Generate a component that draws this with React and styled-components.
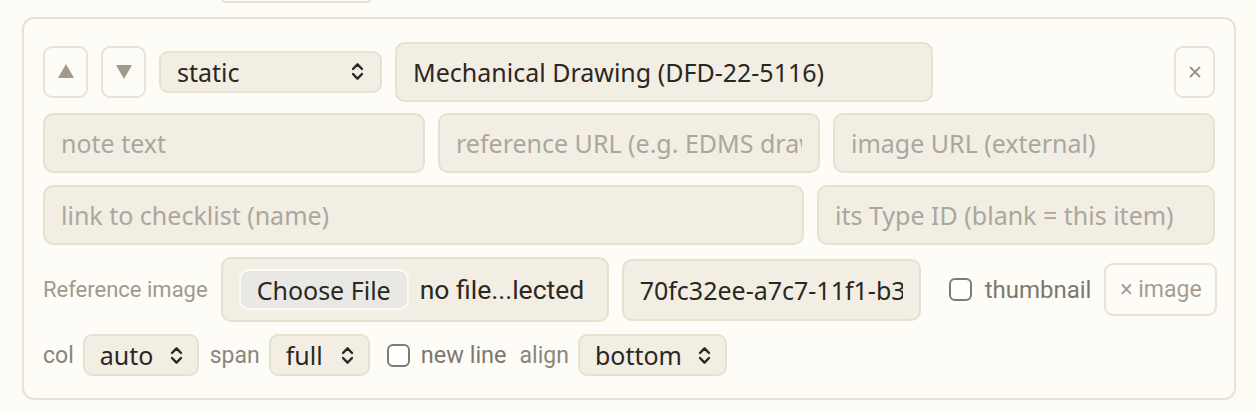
import React from 'react';
import styled, { createGlobalStyle } from 'styled-components';

const GlobalStyle = createGlobalStyle`
  html, body {
    margin: 0;
    padding: 0;
    background: #fcfbf6;
  }
  body {
    font-family: "Noto Sans", "Open Sans", sans-serif;
    color: #2b2722;
  }
  * { box-sizing: border-box; }
`;

const Page = styled.div`
  width: 1256px;
  height: 412px;
  overflow: hidden;
  padding: 0 20px 0 22px;
`;

const PrevTail = styled.div`
  margin-left: 200px;
  width: 149px;
  height: 3px;
  border: 2px solid #e7e2d3;
  border-top: none;
  border-radius: 0 0 10px 10px;
`;

const Card = styled.div`
  margin-top: 14px;
  border: 2px solid #e7e2d3;
  border-radius: 12px;
  background: #fdfcf7;
  padding: 23px 19px 22px 19px;
  display: flex;
  flex-direction: column;
  gap: 12px;
`;

const Row = styled.div`
  display: flex;
  align-items: center;
  gap: ${p => p.$gap || 13}px;
  height: ${p => p.$h}px;
`;

const Grid = styled.div`
  display: grid;
  grid-template-columns: ${p => p.$cols};
  gap: 13px;
`;

const IconButton = styled.button`
  width: ${p => p.$w || 45}px;
  height: 52px;
  border: 2px solid #e8e3d5;
  border-radius: 9px;
  background: transparent;
  display: flex;
  align-items: center;
  justify-content: center;
  padding: 0;
  flex: none;
  margin-left: ${p => (p.$push ? 'auto' : '0')};
`;

const SelectBox = styled.div`
  width: ${p => p.$w}px;
  height: 42px;
  flex: none;
  border: 2px solid #e7e1d1;
  border-radius: 9px;
  background: #f2eee4;
  display: flex;
  align-items: center;
  justify-content: space-between;
  padding: 0 ${p => p.$pr || 14}px 0 ${p => p.$pl || 15}px;
  font-size: 25px;
  color: #2b2722;
`;

const Field = styled.input`
  width: ${p => (p.$w ? `${p.$w}px` : '100%')};
  height: ${p => p.$h || 60}px;
  flex: none;
  min-width: 0;
  border: 2px solid #e6e0d0;
  border-radius: 10px;
  background: #f2eee4;
  padding: 0 16px;
  font-family: inherit;
  font-size: 25px;
  color: #2b2722;
  outline: none;
  &::placeholder {
    color: #aba79e;
  }
`;

const Label = styled.span`
  font-family: "Roboto", "Noto Sans", sans-serif;
  font-size: ${p => p.$size || 23}px;
  color: ${p => p.$color || '#8b8679'};
  white-space: nowrap;
  flex: none;
  margin-left: ${p => p.$ml || 0}px;
`;

const FileBox = styled.div`
  width: 388px;
  height: 65px;
  flex: none;
  border: 2px solid #e6e0d0;
  border-radius: 10px;
  background: #f2eee4;
  display: flex;
  align-items: center;
  gap: 11px;
  padding: 0 16px;
  font-size: 25px;
`;

const FileButton = styled.div`
  height: 41px;
  padding: 0 16px;
  border: 2px solid #fbfaf7;
  border-radius: 10px;
  background: #e9e8e4;
  display: flex;
  align-items: center;
  color: #2b2722;
`;

const FileName = styled.span`
  font-family: "Roboto", "Noto Sans", sans-serif;
  font-size: 26.5px;
  color: #2b2722;
`;

const Check = styled.span`
  width: 23px;
  height: 23px;
  flex: none;
  border: 2px solid #7c7b78;
  border-radius: 6px;
  background: #fff;
  margin-left: ${p => p.$ml || 0}px;
`;

const TextButton = styled.button`
  width: 113px;
  height: 53px;
  padding: 0;
  flex: none;
  margin-left: auto;
  border: 2px solid #e8e3d5;
  border-radius: 9px;
  background: transparent;
  font-family: "Roboto", "Noto Sans", sans-serif;
  font-size: 23px;
  color: #a49f92;
  white-space: nowrap;
`;

const Chevrons = () => (
  <svg width="13" height="19" viewBox="0 0 13 19" fill="none" stroke="#2b2722" strokeWidth="2.4" strokeLinecap="round" strokeLinejoin="round">
    <path d="M2 7 L6.5 2.3 L11 7" />
    <path d="M2 12 L6.5 16.7 L11 12" />
  </svg>
);

const Triangle = ({ down }) => (
  <svg width="16" height="15" viewBox="0 0 16 15">
    <path d={down ? 'M0 1 H16 L8 15 Z' : 'M8 0 L16 14 H0 Z'} fill="#a39b8a" />
  </svg>
);

const Select = ({ value, w, pl, pr }) => (
  <SelectBox $w={w} $pl={pl} $pr={pr}>
    <span>{value}</span>
    <Chevrons />
  </SelectBox>
);

export default function App() {
  return (
    <Page>
      <GlobalStyle />
      <PrevTail />
      <Card>
        <Row $h={59}>
          <IconButton><Triangle /></IconButton>
          <IconButton><Triangle down /></IconButton>
          <Select value="static" w={223} pl={16} pr={16} />
          <Field $w={538} $h={60} defaultValue="Mechanical Drawing (DFD-22-5116)" />
          <IconButton $w={41} $push>
            <svg width="12" height="12" viewBox="0 0 12 12" stroke="#9a9486" strokeWidth="1.8" strokeLinecap="round">
              <path d="M1.5 1.5 L10.5 10.5 M10.5 1.5 L1.5 10.5" />
            </svg>
          </IconButton>
        </Row>
        <Grid $cols="1fr 1fr 1fr">
          <Field placeholder="note text" />
          <Field placeholder="reference URL (e.g. EDMS drawing)" />
          <Field placeholder="image URL (external)" />
        </Grid>
        <Grid $cols="761px 1fr">
          <Field placeholder="link to checklist (name)" />
          <Field placeholder="its Type ID (blank = this item)" />
        </Grid>
        <Row $h={65}>
          <Label $size={22} $color="#a09a8c">Reference image</Label>
          <FileBox>
            <FileButton>Choose File</FileButton>
            <FileName>no file...lected</FileName>
          </FileBox>
          <Field $w={299} $h={62} defaultValue="70fc32ee-a7c7-11f1-b3c4-0242ac120002" />
          <Check $ml={15} />
          <Label $size={24} $color="#7d786b">thumbnail</Label>
          <TextButton>× image</TextButton>
        </Row>
        <Row $h={42} $gap={9}>
          <Label>col</Label>
          <Select value="auto" w={116} />
          <Label $ml={2}>span</Label>
          <Select value="full" w={101} />
          <Check $ml={8} />
          <Label $ml={2} $size={23.5} $color="#7d786b">new line</Label>
          <Label $ml={4} $size={23}>align</Label>
          <Select value="bottom" w={149} />
        </Row>
      </Card>
    </Page>
  );
}
